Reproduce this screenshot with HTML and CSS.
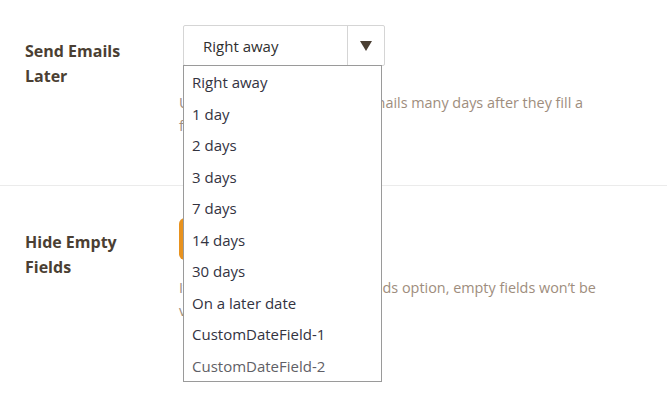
FILE: index.html
```html
<!DOCTYPE html>
<html lang="en">
<head>
    <meta charset="UTF-8">
    <meta name="viewport" content="width=device-width, initial-scale=1.0">
    <title>Email Settings</title>
    <link rel="stylesheet" href="styles.css">
</head>
<body>
    <!-- Send Emails Later -->
    <div class="setting">
        <div class="setting-label">Send Emails Later</div>
        <div class="setting-body">
            <div class="select-wrap">
                <div class="select">
                    <span class="select-value">Right away</span>
                    <span class="select-arrow">
                        <svg width="12" height="10" viewBox="0 0 12 10"><path d="M0 0 H12 L6 10 Z" fill="#4b3f33"/></svg>
                    </span>
                </div>
                <ul class="select-menu">
                    <li>Right away</li>
                    <li>1 day</li>
                    <li>2 days</li>
                    <li>3 days</li>
                    <li>7 days</li>
                    <li>14 days</li>
                    <li>30 days</li>
                    <li>On a later date</li>
                    <li>CustomDateField-1</li>
                    <li class="hover">CustomDateField-2</li>
                </ul>
            </div>
            <p class="setting-desc">Use this option to send out emails many days after they fill a form.</p>
        </div>
    </div>

    <!-- Hide Empty Fields -->
    <div class="setting">
        <div class="setting-label">Hide Empty Fields</div>
        <div class="setting-body">
            <div class="toggle">
                <span class="toggle-on">Yes</span>
                <span class="toggle-off">No</span>
            </div>
            <p class="setting-desc">If enabling the Hide Empty Fields option, empty fields won’t be visible in the emails.</p>
        </div>
    </div>
</body>
</html>
```

FILE: styles.css
```css
/* Global Styling */
body {
    font-family: 'Open Sans', 'Noto Sans', sans-serif;
    background-color: #fff;
    margin: 0;
    padding: 0;
    color: #333;
    font-size: 14px;
    min-height: 400px;
}

/* Setting rows */
.setting {
    display: flex;
    padding: 25px 45px 48px 25px;
    border-bottom: 1px solid #ebebeb;
}

.setting + .setting {
    padding-top: 32px;
    border-bottom: none;
}

.setting-label {
    width: 124px;
    flex-shrink: 0;
    margin-top: 14px;
    margin-right: 30px;
    font-weight: bold;
    font-size: 16px;
    line-height: 25px;
    color: #4b3f33;
}

.setting + .setting .setting-label {
    margin-top: 12px;
}

.setting-body {
    flex: 1;
}

.setting-desc {
    margin: 25px 0 0 0;
    font-size: 14.4px;
    line-height: 23px;
    color: #9e8d7d;
}

.setting + .setting .setting-desc {
    margin-top: 16px;
}

/* Select */
.select-wrap {
    position: relative;
    margin-left: 4px;
    width: 202px;
}

.select {
    display: flex;
    height: 39px;
    border: 1px solid #d5d5d5;
    border-radius: 2px;
    background-color: #fff;
}

.select-value {
    flex: 1;
    padding-left: 19px;
    line-height: 41px;
    font-size: 15px;
    color: #2f2f2f;
}

.select-arrow {
    width: 36px;
    border-left: 1px solid #d5d5d5;
    display: flex;
    align-items: center;
    justify-content: center;
}

.select-menu {
    position: absolute;
    top: 40px;
    left: 0;
    width: 197px;
    margin: 0;
    padding: 0;
    list-style: none;
    background-color: #fff;
    border: 1px solid #9a9a9a;
    z-index: 10;
}

.select-menu li {
    height: 31.5px;
    line-height: 33px;
    padding-left: 8px;
    font-size: 15px;
    color: #33333f;
}

.select-menu li.hover {
    color: #5f5f66;
}

/* Toggle */
.toggle {
    display: flex;
    width: 120px;
    height: 42px;
    border-radius: 6px;
    overflow: hidden;
    background-color: #eee;
    font-size: 14px;
}

.toggle-on,
.toggle-off {
    flex: 1;
    text-align: center;
    line-height: 42px;
}

.toggle-on {
    background-color: #e8921e;
    color: #fff;
}

.toggle-off {
    color: #999;
}
```
